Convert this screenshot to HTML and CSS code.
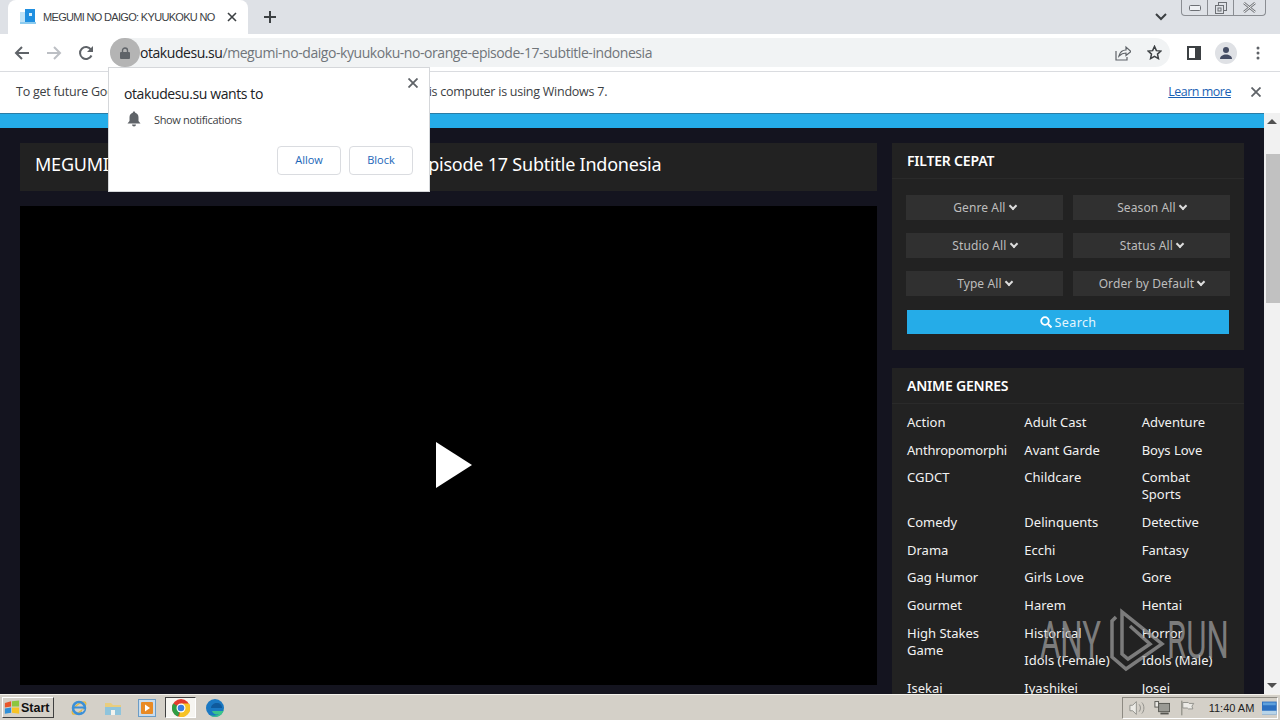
FILE: index.html
```html
<!DOCTYPE html>
<html lang="en">
<head>
  <meta charset="UTF-8" />
  <meta name="viewport" content="width=device-width, initial-scale=1.0" />
  <title>MEGUMI NO DAIGO: KYUUKOKU NO ORANGE Episode 17 Subtitle Indonesia</title>
  <link rel="stylesheet" href="styles.css">
</head>
<body>
  <div class="tabstrip">
    <div class="tab">
      <svg class="favicon" width="16" height="16" viewBox="0 0 16 16"><rect x="5" y="0" width="10" height="13" fill="#1f8fe0"/><rect x="0" y="3" width="5" height="10" fill="#bfe3f7"/><rect x="0" y="13" width="16" height="2" fill="#8ccbef"/><rect x="9" y="4" width="3" height="3" fill="#d8f0fb"/></svg>
      <span class="tab-title">MEGUMI NO DAIGO: KYUUKOKU NO</span>
      <svg class="tab-close" width="10" height="10" viewBox="0 0 10 10"><path d="M1 1l8 8M9 1l-8 8" stroke="#3c4043" stroke-width="1.6"/></svg>
    </div>
    <svg class="new-tab" width="12" height="12" viewBox="0 0 12 12"><path d="M6 0v12M0 6h12" stroke="#3c4043" stroke-width="2"/></svg>
    <svg class="tab-list" width="12" height="8" viewBox="0 0 12 8"><path d="M1 1l5 5 5-5" fill="none" stroke="#3c4043" stroke-width="2"/></svg>
    <div class="window-btns">
      <div class="win-btn"><svg width="12" height="6" viewBox="0 0 12 6"><rect x="0.5" y="0.5" width="11" height="5" rx="1" fill="#eef0f3" stroke="#6d7075"/></svg></div>
      <div class="win-btn"><svg width="12" height="12" viewBox="0 0 12 12"><rect x="3.5" y="0.5" width="8" height="8" fill="none" stroke="#6d7075"/><rect x="0.5" y="3.5" width="8" height="8" fill="#dee1e6" stroke="#6d7075"/><rect x="3" y="6" width="3" height="3" fill="none" stroke="#6d7075"/></svg></div>
      <div class="win-btn win-close"><svg width="13" height="11" viewBox="0 0 13 11"><path d="M1 1l11 9M12 1l-11 9" stroke="#6d7075" stroke-width="2.4"/><path d="M1 1l11 9M12 1l-11 9" stroke="#f4f5f6" stroke-width="1"/></svg></div>
    </div>
  </div>

  <div class="toolbar">
    <svg class="nav-icon" width="16" height="16" viewBox="0 0 16 16"><path d="M15 8H2M8 2L2 8l6 6" fill="none" stroke="#5f6368" stroke-width="2"/></svg>
    <svg class="nav-icon" width="16" height="16" viewBox="0 0 16 16"><path d="M1 8h13M8 2l6 6-6 6" fill="none" stroke="#bcbfc4" stroke-width="2"/></svg>
    <svg class="nav-icon" width="16" height="16" viewBox="0 0 16 16"><path d="M13.5 10.5A6 6 0 1 1 13 4.6" fill="none" stroke="#5f6368" stroke-width="2"/><path d="M15 1v6H9z" fill="#5f6368"/></svg>
    <div class="omnibox">
      <div class="lock-chip">
        <svg width="10" height="12" viewBox="0 0 10 12"><path d="M2.5 5V3.5a2.5 2.5 0 0 1 5 0V5" fill="none" stroke="#5f6368" stroke-width="1.4"/><rect y="5" width="10" height="7" rx="1" fill="#5f6368"/></svg>
      </div>
      <div class="url"><span class="url-host">otakudesu.su</span>/megumi-no-daigo-kyuukoku-no-orange-episode-17-subtitle-indonesia</div>
      <svg class="omni-icon" width="16" height="16" viewBox="0 0 16 16"><path d="M1 6v9h11v-3" fill="none" stroke="#5f6368" stroke-width="1.2"/><path d="M4 11c1-4 4-6 7-6V2l5 4.500-5 4V8c-3 0-5 1-7 3z" fill="none" stroke="#5f6368" stroke-width="1.2"/></svg>
      <svg class="omni-icon" width="15" height="15" viewBox="0 0 16 16"><path d="M8 1.500l2 4.500 4.800.5-3.600 3.200 1 4.800L8 12.100 3.800 14.500l1-4.800L1.200 6.500 6 6z" fill="none" stroke="#3c4043" stroke-width="1.6"/></svg>
    </div>
    <svg class="side-icon" width="14" height="14" viewBox="0 0 14 14"><rect x="1" y="1" width="12" height="12" fill="#fff" stroke="#3c4043" stroke-width="2"/><rect x="8" y="1" width="5" height="12" fill="#3c4043"/></svg>
    <div class="avatar"><svg width="14" height="14" viewBox="0 0 14 14"><circle cx="7" cy="4" r="3" fill="#444c63"/><path d="M1 13c0-3 3-4.500 6-4.500s6 1.500 6 4.500z" fill="#444c63"/></svg></div>
    <svg class="menu-dots" width="4" height="14" viewBox="0 0 4 14"><circle cx="2" cy="2" r="1.500" fill="#5f6368"/><circle cx="2" cy="7" r="1.500" fill="#5f6368"/><circle cx="2" cy="12" r="1.500" fill="#5f6368"/></svg>
  </div>

  <div class="infobar">
    <span class="info-text">To get future Google Chrome updates, you'll need Windows 10 or later. This computer is using Windows 7.</span>
    <a class="learn-more">Learn more</a>
    <svg class="info-close" width="10" height="10" viewBox="0 0 10 10"><path d="M0.500 0.500l9 9M9.500 0.500l-9 9" stroke="#5f6368" stroke-width="1.800"/></svg>
  </div>

  <div class="viewport">
    <div class="page">
      <div class="top-bar"></div>
      <div class="content">
        <div class="main-col">
          <h1 class="post-title">MEGUMI NO DAIGO: KYUUKOKU NO ORANGE Episode 17 Subtitle Indonesia</h1>
          <div class="player">
            <svg width="36" height="46" viewBox="0 0 36 46"><path d="M0 0l36 23L0 46z" fill="#fff"/></svg>
          </div>
        </div>
        <div class="side-col">
          <div class="widget">
            <h3 class="widget-title">FILTER CEPAT</h3>
            <div class="filter-body">
              <div class="filter-grid">
                <div class="filter-btn">Genre All <span class="caret"></span></div>
                <div class="filter-btn">Season All <span class="caret"></span></div>
                <div class="filter-btn">Studio All <span class="caret"></span></div>
                <div class="filter-btn">Status All <span class="caret"></span></div>
                <div class="filter-btn">Type All <span class="caret"></span></div>
                <div class="filter-btn">Order by Default <span class="caret"></span></div>
              </div>
              <div class="search-btn">
                <svg width="12" height="12" viewBox="0 0 12 12"><circle cx="5" cy="5" r="3.800" fill="none" stroke="#fff" stroke-width="1.800"/><path d="M8 8l3.500 3.500" stroke="#fff" stroke-width="2"/></svg>
                Search
              </div>
            </div>
          </div>
          <div class="widget">
            <h3 class="widget-title">ANIME GENRES</h3>
            <ul class="genre-list">
              <li>Action</li>
              <li>Adult Cast</li>
              <li>Adventure</li>
              <li>Anthropomorphi</li>
              <li>Avant Garde</li>
              <li>Boys Love</li>
              <li>CGDCT</li>
              <li>Childcare</li>
              <li>Combat<br>Sports</li>
              <li>Comedy</li>
              <li>Delinquents</li>
              <li>Detective</li>
              <li>Drama</li>
              <li>Ecchi</li>
              <li>Fantasy</li>
              <li>Gag Humor</li>
              <li>Girls Love</li>
              <li>Gore</li>
              <li>Gourmet</li>
              <li>Harem</li>
              <li>Hentai</li>
              <li class="tall">High Stakes Game</li>
              <li>Historical</li>
              <li>Horror</li>
              <li>Idols (Female)</li>
              <li>Idols (Male)</li>
              <li>Isekai</li>
              <li>Iyashikei</li>
              <li>Josei</li>
            </ul>
          </div>
        </div>
      </div>
    </div>
    <div class="scrollbar">
      <div class="scroll-arrow"><svg width="10" height="5" viewBox="0 0 10 5"><path d="M5 0l5 5H0z" fill="#505050"/></svg></div>
      <div class="scroll-track"><div class="scroll-thumb"></div></div>
      <div class="scroll-arrow"><svg width="10" height="5" viewBox="0 0 10 5"><path d="M0 0h10L5 5z" fill="#505050"/></svg></div>
    </div>
  </div>

  <div class="taskbar">
    <div class="start-btn">
      <svg width="16" height="15" viewBox="0 0 18 16"><path d="M1 3l7-2v6l-7 1z" fill="#e8562a"/><path d="M9 1l8-1v7l-8 0z" fill="#8cc63f"/><path d="M1 9l7-1v6l-7 1z" fill="#2f8fd8"/><path d="M9 8h8v7l-8-1z" fill="#f7c325"/></svg>
      <span>Start</span>
    </div>
    <div class="quick-launch">
      <svg class="task-icon" width="18" height="18" viewBox="0 0 18 18"><ellipse cx="9" cy="9" rx="8.500" ry="3.500" transform="rotate(-40 9 9)" fill="none" stroke="#e8b93a" stroke-width="1.300"/><circle cx="9" cy="9" r="6" fill="none" stroke="#3a8fd8" stroke-width="2.500"/><path d="M4 8.500h10" stroke="#3a8fd8" stroke-width="2"/><path d="M15 10.500l-3 0 0 3z" fill="#d4d0c8"/></svg>
      <svg class="task-icon" width="18" height="18" viewBox="0 0 18 18"><path d="M1 4h6l2 2h8v10H1z" fill="#e9cd7e"/><rect x="1" y="8" width="16" height="8" fill="#8fc4dc"/><rect x="7" y="11" width="4" height="5" fill="#f3f3ee"/></svg>
      <svg class="task-icon" width="18" height="18" viewBox="0 0 18 18"><rect x="0.500" y="0.500" width="17" height="17" fill="#c9dcec" stroke="#6b9cc6"/><rect x="3" y="3" width="12" height="12" rx="1" fill="#e98a24"/><path d="M7 5.500l5 3.500-5 3.500z" fill="#fff"/></svg>
      <div class="task-active">
        <svg width="18" height="18" viewBox="0 0 18 18"><circle cx="9" cy="9" r="9" fill="#e33b2e"/><path d="M9 9L1.200 4.500A9 9 0 0 0 6 17.500z" fill="#2f9e44"/><path d="M9 4.500h8A9 9 0 0 1 7 17.800L9 9z" fill="#f7c325"/><circle cx="9" cy="9" r="4.500" fill="#fff"/><circle cx="9" cy="9" r="3.300" fill="#3a7de0"/></svg>
      </div>
      <svg class="task-icon edge-icon" width="18" height="18" viewBox="0 0 18 18"><circle cx="9" cy="9" r="9" fill="#1a78c2"/><path d="M18 9c0 5-4 9-9 9-2 0-4-1-5-2 3 1 7 1 9-1-3 1-6 0-7-3h12z" fill="#3cc48a"/><path d="M5 9c0-3 3-5 6-5 3 0 5 2 5 5z" fill="#0f5a9c"/></svg>
    </div>
    <div class="tray">
      <svg width="18" height="16" viewBox="0 0 18 16"><path d="M1 5h3l4-4v14l-4-4H1z" fill="#ecebe6" stroke="#8d8d88"/><path d="M11 4c2 2 2 6 0 8M14 2c3 3 3 9 0 12" fill="none" stroke="#8d8d88"/></svg>
      <svg width="18" height="16" viewBox="0 0 18 16"><rect x="5" y="3" width="12" height="9" fill="#9a9a94" stroke="#55554f"/><rect x="1" y="1" width="4" height="6" fill="#ecebe6" stroke="#55554f"/><path d="M7 14h9" stroke="#55554f" stroke-width="2"/></svg>
      <svg class="tray-flag" width="16" height="16" viewBox="0 0 16 16"><path d="M2 0v16" stroke="#77776f"/><path d="M3 2h6l1 1h5l-2 3 1 3H9L8 8H3z" fill="#ecebe6" stroke="#8d8d88"/></svg>
      <span class="clock">11:40 AM</span>
      <svg width="16" height="14" viewBox="0 0 16 14"><rect width="16" height="14" fill="#2b6fc0"/><rect y="10" width="16" height="4" fill="#b8d4e8"/><rect x="1" y="1" width="14" height="3" fill="#5ea0dc"/></svg>
    </div>
  </div>

  <!-- things lying over the page -->
  <div class="permission">
    <svg class="perm-close" width="10" height="10" viewBox="0 0 10 10"><path d="M0.500 0.500l9 9M9.500 0.500l-9 9" stroke="#5f6368" stroke-width="1.800"/></svg>
    <div class="perm-title">otakudesu.su wants to</div>
    <div class="perm-row">
      <svg width="14" height="16" viewBox="0 0 14 16"><path d="M7 0.500c.8 0 1.200.5 1.200 1.200C10.500 2.300 11.500 4 11.500 6.500V10L13.500 12.500H.500L2.500 10V6.500C2.500 4 3.500 2.300 5.800 1.700 5.800 1 6.200.5 7 .5z" fill="#5f6368"/><path d="M5 13.500h4a2 2 0 0 1-4 0z" fill="#5f6368"/></svg>
      <span>Show notifications</span>
    </div>
    <div class="perm-actions">
      <div class="perm-btn">Allow</div>
      <div class="perm-btn">Block</div>
    </div>
  </div>

  <div class="watermark">
    <span class="wm-text">ANY</span>
    <svg class="wm-logo" width="60" height="64" viewBox="0 0 60 64"><path d="M8 9L4 13V49L18 61L54 36L14 4V46L20 51L42 36L22 18" fill="none" stroke="currentColor" stroke-width="3.500"/></svg>
    <span class="wm-text">RUN</span>
  </div>
</body>
</html>
```

FILE: styles.css
```css
html, body {
  margin: 0;
  padding: 0;
  height: 720px;
  overflow: hidden;
  font-family: 'Noto Sans', sans-serif;
  background: #fff;
}
body {
  display: flex;
  flex-direction: column;
  position: relative;
}

/* browser tabs */
.tabstrip {
  height: 34px;
  background: #dee1e6;
  display: flex;
  align-items: center;
  flex-shrink: 0;
}
.tab {
  width: 240px;
  height: 34px;
  margin-left: 8px;
  background: #fff;
  border-radius: 8px 8px 0 0;
  display: flex;
  align-items: center;
  padding: 0 11px 0 12px;
  box-sizing: border-box;
}
.favicon {
  margin-right: 7px;
  flex-shrink: 0;
}
.tab-title {
  white-space: nowrap;
  font-family: 'Liberation Sans', sans-serif;
  font-size: 11px;
  letter-spacing: -0.68px;
  color: #3c4043;
}
.tab-close {
  margin-left: auto;
}
.new-tab {
  margin-left: 16px;
}
.tab-list {
  margin-left: auto;
  margin-right: 14px;
}
.window-btns {
  display: flex;
  align-self: flex-start;
  height: 15px;
  margin-right: 14px;
  border: 1px solid #8a8d92;
  border-top: none;
  border-radius: 0 0 4px 4px;
}
.win-btn {
  width: 25px;
  display: flex;
  align-items: center;
  justify-content: center;
  border-right: 1px solid #8a8d92;
}
.win-close {
  width: 31px;
  border-right: none;
}

/* address bar */
.toolbar {
  height: 37px;
  background: #fff;
  display: flex;
  align-items: center;
  border-bottom: 1px solid #dadce0;
  flex-shrink: 0;
  padding-left: 14px;
}
.nav-icon {
  margin-right: 16px;
}
.omnibox {
  width: 1060px;
  height: 29px;
  padding-right: 8px;
  box-sizing: border-box;
  background: #f1f3f4;
  border-radius: 15px;
  display: flex;
  align-items: center;
  flex-shrink: 0;
}
.lock-chip {
  width: 30px;
  height: 29px;
  background: #b4b4b4;
  border-radius: 15px;
  display: flex;
  align-items: center;
  justify-content: center;
}
.url {
  font-family: 'Open Sans', sans-serif;
  font-size: 14px;
  letter-spacing: -0.44px;
  color: #70757a;
  white-space: nowrap;
  flex: 1;
}
.url-host {
  color: #202124;
}
.omni-icon {
  margin-left: 16px;
}
.side-icon {
  margin-left: 17px;
}
.avatar {
  width: 22px;
  height: 22px;
  margin-left: 14px;
  border-radius: 50%;
  background: #dfe1e5;
  display: flex;
  align-items: center;
  justify-content: center;
}
.menu-dots {
  margin-left: 19px;
}

/* update notice */
.infobar {
  height: 41px;
  box-sizing: border-box;
  background: #fff;
  display: flex;
  align-items: center;
  padding: 0 19px 2px 16px;
  flex-shrink: 0;
  font-family: 'Open Sans', sans-serif;
  font-size: 12.5px;
  letter-spacing: -0.25px;
  color: #3c4043;
}
.learn-more {
  margin-left: auto;
  letter-spacing: -0.5px;
  color: #1a5fb4;
  text-decoration: underline;
}
.info-close {
  margin-left: 20px;
}

/* the site */
.viewport {
  flex: 1;
  display: flex;
  min-height: 0;
  position: relative;
}
.page {
  flex: 1;
  background: #14141f;
  overflow: hidden;
  min-width: 0;
}
.top-bar {
  height: 15px;
  background: #25ace8;
  border-top: 1px solid #2a7da6;
  box-sizing: border-box;
}
.content {
  display: flex;
  gap: 15px;
  padding: 15px 20px 0;
}
.main-col {
  width: 857px;
  flex-shrink: 0;
}
.post-title {
  margin: 0;
  height: 48px;
  line-height: 43px;
  padding-left: 15px;
  background: #222;
  color: #fff;
  font-size: 18px;
  font-weight: 400;
  letter-spacing: -0.22px;
  white-space: nowrap;
}
.player {
  height: 479px;
  box-sizing: border-box;
  padding: 38px 0 0 10px;
  margin-top: 15px;
  background: #000;
  display: flex;
  align-items: center;
  justify-content: center;
}
.side-col {
  width: 352px;
  flex-shrink: 0;
}
.widget {
  background: #222;
  margin-bottom: 18px;
}
.widget-title {
  margin: 0;
  height: 36px;
  line-height: 35px;
  padding-left: 15px;
  box-sizing: border-box;
  font-size: 14px;
  font-weight: 600;
  letter-spacing: -0.2px;
  color: #fff;
  border-bottom: 1px solid #2a2a2a;
}
.filter-body {
  padding: 16px 14px 16px;
}
.filter-grid {
  display: grid;
  grid-template-columns: 157px 157px;
  column-gap: 10px;
  row-gap: 13px;
}
.filter-btn {
  height: 25px;
  line-height: 25px;
  background: #303030;
  color: #bdbdbd;
  font-size: 12px;
  text-align: center;
  letter-spacing: 0.1px;
}
.caret {
  display: inline-block;
  width: 4px;
  height: 4px;
  margin-left: 1px;
  border-right: 2px solid #ddd;
  border-bottom: 2px solid #ddd;
  transform: translateY(-3px) rotate(45deg);
}
.search-btn {
  height: 24px;
  margin: 14px 1px 0;
  background: #25ace8;
  color: #e6f6fd;
  font-size: 12.5px;
  letter-spacing: 0.4px;
  display: flex;
  align-items: center;
  justify-content: center;
  gap: 3px;
}
.genre-list {
  list-style: none;
  margin: 0;
  padding: 4.5px 0 0;
  display: grid;
  grid-template-columns: repeat(3, minmax(0, 1fr));
}
.genre-list li {
  padding: 5.35px 2px 5.35px 15px;
  line-height: 17px;
  font-size: 13px;
  color: #f2f2f2;
  white-space: nowrap;
}
.genre-list li:nth-child(4) {
  letter-spacing: -0.2px;
}
.genre-list li.tall {
  grid-row: span 2;
  white-space: normal;
  padding-right: 24px;
}

/* fake scrollbar */
.scrollbar {
  width: 16px;
  background: #f1f1f1;
  display: flex;
  flex-direction: column;
  flex-shrink: 0;
}
.scroll-arrow {
  height: 17px;
  display: flex;
  align-items: center;
  justify-content: center;
}
.scroll-track {
  flex: 1;
  padding-top: 24px;
}
.scroll-thumb {
  height: 149px;
  margin-left: 2px;
  background: #c1c1c1;
}

/* windows taskbar */
.taskbar {
  height: 26px;
  background: #d4d0c8;
  border-top: 1px solid #f4f2ec;
  box-sizing: border-box;
  display: flex;
  align-items: center;
  flex-shrink: 0;
  padding-left: 2px;
  position: relative;
}
.start-btn {
  width: 52px;
  height: 21px;
  box-sizing: border-box;
  display: flex;
  align-items: center;
  gap: 1px;
  padding-left: 1px;
  font-family: 'Liberation Sans', sans-serif;
  font-size: 12.5px;
  font-weight: bold;
  color: #111;
  border: 1px solid;
  border-color: #fff #404040 #404040 #fff;
}
.quick-launch {
  display: flex;
  align-items: center;
  margin-left: 8px;
}
.task-icon {
  margin: 0 8px;
}
.edge-icon {
  margin-left: 10px;
}
.task-active {
  width: 31px;
  height: 21px;
  margin: 0 0 0 1px;
  box-sizing: border-box;
  background: #f6f5f1;
  border: 1px solid;
  border-color: #404040 #fff #fff #404040;
  display: flex;
  align-items: center;
  justify-content: center;
}
.tray {
  margin-left: auto;
  margin-right: 2px;
  width: 156px;
  height: 22px;
  box-sizing: border-box;
  border: 1px solid;
  border-color: #8d8a82 #fff #fff #8d8a82;
  display: flex;
  align-items: center;
  gap: 8px;
  padding-left: 6px;
}
.tray-flag {
  margin-left: 2px;
}
.clock {
  font-family: 'Liberation Sans', sans-serif;
  font-size: 11px;
  color: #222;
  margin-left: 6px;
  white-space: nowrap;
}

/* notification prompt */
.permission {
  position: absolute;
  left: 108px;
  top: 67px;
  width: 322px;
  height: 125px;
  box-sizing: border-box;
  background: #fff;
  border: 1px solid #d5d7da;
  padding: 16px 16px 0 15px;
  font-family: 'Open Sans', sans-serif;
  color: #3c4043;
}
.perm-close {
  position: absolute;
  right: 11px;
  top: 10px;
}
.perm-title {
  font-size: 14px;
  letter-spacing: -0.4px;
  color: #202124;
  line-height: 20px;
}
.perm-row {
  display: flex;
  align-items: center;
  gap: 13px;
  margin-top: 7px;
  padding-left: 3px;
  font-size: 11px;
  letter-spacing: -0.35px;
}
.perm-actions {
  display: flex;
  justify-content: flex-end;
  gap: 8px;
  margin-top: 19px;
}
.perm-btn {
  width: 64px;
  height: 29px;
  line-height: 25px;
  box-sizing: border-box;
  border: 1px solid #dadce0;
  border-radius: 4px;
  text-align: center;
  font-size: 11px;
  color: #1a66b8;
}

/* any.run mark */
.watermark {
  position: absolute;
  left: 1040px;
  top: 608px;
  height: 64px;
  display: flex;
  align-items: center;
  pointer-events: none;
  color: rgba(160, 160, 160, 0.72);
}
.wm-text {
  width: 62px;
  font-family: 'Roboto', sans-serif;
  font-weight: 400;
  font-size: 52px;
  transform: scaleX(0.6);
  transform-origin: left center;
  white-space: nowrap;
}
.wm-logo {
  margin: 0 -1px 0 6px;
}
```
